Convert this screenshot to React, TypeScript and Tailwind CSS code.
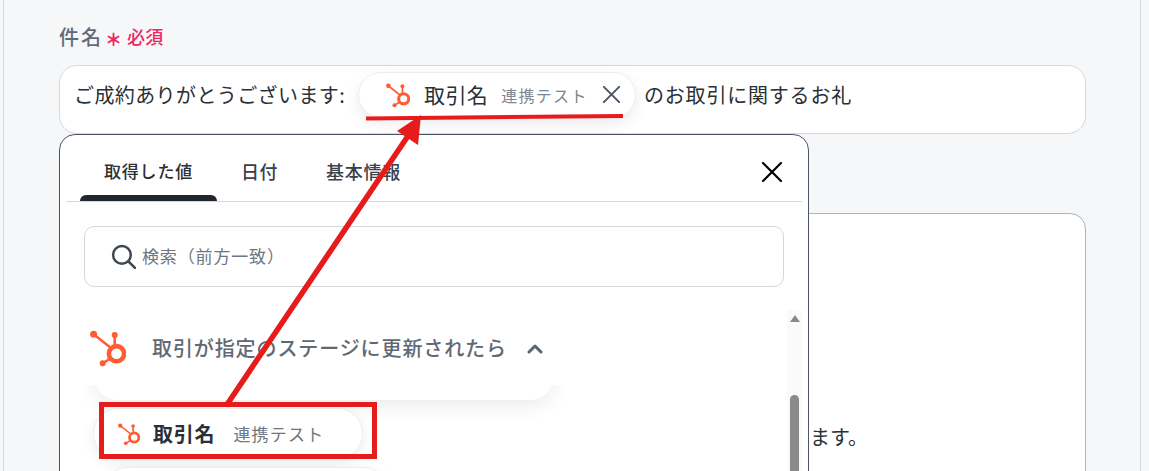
const FONT = "font-['Noto_Sans_CJK_JP','Noto_Sans',sans-serif]";

function Hub({ className }: { className: string }) {
  return (
    <svg viewBox="0 0 36 38" className={className} fill="none">
      <circle cx="26.5" cy="24.7" r="7.6" stroke="#ff5c35" strokeWidth="4.6" />
      <circle cx="3.6" cy="5.3" r="3.5" fill="#ff5c35" />
      <circle cx="24.7" cy="6" r="3" fill="#ff5c35" />
      <circle cx="12.7" cy="34.3" r="3" fill="#ff5c35" />
      <path d="M3.6 5.3 L21 19 M24.7 6 V17 M12.7 34.3 L21 29" stroke="#ff5c35" strokeWidth="2.6" />
    </svg>
  );
}

function X({ className, color, width }: { className: string; color: string; width: number }) {
  return (
    <svg viewBox="0 0 20 20" className={className} fill="none">
      <path d="M1 1 L19 19 M19 1 L1 19" stroke={color} strokeWidth={width} strokeLinecap="round" />
    </svg>
  );
}

export default function App() {
  return (
    <div className={`relative h-[471px] w-[1149px] overflow-hidden bg-[#f6f7f9] ${FONT}`}>
      <div className="ml-[3px] h-[471px] w-[1138px] border-x border-[#d3d8e0] pl-[55px] pr-[54px] pt-[23px]">
        <div className="-mt-[1px] flex h-[29px] items-center">
          <span className="text-[20px] font-medium tracking-[0.1em] text-[#5f6b7a]">件名</span>
          <span className="ml-[2px] mt-[3px] text-[17px] font-black leading-none text-[#f0265f]">＊</span>
          <span className="ml-[5px] text-[18px] font-medium tracking-[0.02em] text-[#f0265f]">必須</span>
        </div>
        <div className="mt-[14px] flex h-[69px] items-center rounded-[18px] border border-[#d3d8e0] bg-white pb-[10px] pl-[14px]">
          <span className="w-[284px] shrink-0 whitespace-nowrap text-[20px] tracking-[0.02em] text-[#2b2f36]">ご成約ありがとうございます:</span>
          <div className="flex h-[46px] w-[278px] shrink-0 items-center rounded-full border border-[#eceef1] bg-white pl-[27px] shadow-[0_6px_16px_rgba(0,0,0,0.08)]">
            <Hub className="h-[26px] w-[24px]" />
            <span className="ml-[14px] whitespace-nowrap text-[21px] tracking-[0.02em] text-[#2b2f36]">取引名</span>
            <span className="ml-[13px] whitespace-nowrap text-[16px] tracking-[0.08em] text-[#7c8591]">連携テスト</span>
            <X className="ml-[15px] h-[17px] w-[17px]" color="#4e5866" width={2.4} />
          </div>
          <span className="ml-[8px] whitespace-nowrap text-[20px] tracking-[0.04em] text-[#2b2f36]">のお取引に関するお礼</span>
        </div>
        <div className="mt-[79px] flex h-[300px] items-start justify-end rounded-[16px] border border-[#aab2bd] bg-white pr-[217px] pt-[208px]">
          <span className="text-[20px] text-[#2b2f36]">ます。</span>
        </div>
      </div>

      <div className="absolute left-[59px] top-[134px] h-[360px] w-[750px] rounded-[16px] border border-[#4b5563] bg-white px-[6px]">
        <div className="relative flex h-[67px] items-end border-b border-[#d3d8e0] pl-[14px]">
          <div className="relative flex h-[66px] w-[137px] items-center justify-center pt-[6px] text-[17px] font-medium tracking-[0.05em] text-[#2b2f36]">
            取得した値
            <div className="absolute bottom-0 left-0 h-[6px] w-[137px] rounded-t-[6px] bg-[#22272e]" />
          </div>
          <div className="flex h-[66px] w-[85px] items-center justify-center pt-[6px] text-[18px] font-medium tracking-[0.03em] text-[#3a414b]">日付</div>
          <div className="ml-[5px] flex h-[66px] w-[113px] items-center justify-center pt-[6px] text-[18px] font-medium tracking-[0.04em] text-[#3a414b]">基本情報</div>
          <X className="absolute right-[20px] top-[27px] h-[20px] w-[20px]" color="#000" width={2.2} />
        </div>
        <div className="ml-[18px] mt-[24px] flex h-[61px] w-[700px] items-center rounded-[10px] border border-[#d3d8e0] pb-[2px] pl-[26px]">
          <svg viewBox="0 0 24 24" className="mt-[2px] h-[25px] w-[25px]" fill="none" stroke="#3f4752" strokeWidth="2.4" strokeLinecap="round">
            <circle cx="10.5" cy="10.5" r="8.5" />
            <path d="M16.8 16.8 L23 23" />
          </svg>
          <span className="ml-[6px] text-[17px] tracking-[0.05em] text-[#6d7682]">検索（前方一致）</span>
        </div>
        <div className="relative mt-[23px] h-[170px] w-[736px] overflow-hidden">
          <div className="relative z-10 flex h-[75px] w-[721px] items-center bg-white pl-[24px]">
            <Hub className="h-[38px] w-[36px]" />
            <span className="ml-[26px] whitespace-nowrap text-[20px] font-medium tracking-[0.045em] text-[#5f6873]">取引が指定のステージに更新されたら</span>
            <svg viewBox="0 0 16 10" className="ml-[20px] mt-[2px] h-[10px] w-[16px]" fill="none" stroke="#5b6470" strokeWidth="3" strokeLinecap="round" strokeLinejoin="round">
              <path d="M2 8 L8 2 L14 8" />
            </svg>
          </div>
          <div className="ml-[29px] -mt-[30px] h-[45px] w-[458px] rounded-[22px] bg-white shadow-[0_6px_20px_rgba(0,0,0,0.08)]" />
          <div className="ml-[27px] mt-[8px] flex h-[51px] w-[270px] items-center rounded-full border border-[#eceef1] bg-white pl-[24px] shadow-[0_4px_14px_rgba(0,0,0,0.08)]">
            <Hub className="h-[24px] w-[22px]" />
            <span className="ml-[13px] whitespace-nowrap text-[20px] font-bold tracking-[0.04em] text-[#2b2f36]">取引名</span>
            <span className="ml-[18px] whitespace-nowrap text-[17px] tracking-[0.07em] text-[#6d7682]">連携テスト</span>
          </div>
          <div className="ml-[37px] mt-[8px] h-[50px] w-[285px] rounded-full border border-[#eceef1] bg-white shadow-[0_4px_14px_rgba(0,0,0,0.08)]" />
          <div className="absolute right-0 top-0 z-20 h-full w-[15px] bg-[#fafafa]">
            <div className="ml-[3px] mt-[5px] h-0 w-0 border-x-[5px] border-b-[7px] border-x-transparent border-b-[#8a8a8a]" />
            <div className="absolute left-[3px] top-[85px] h-[90px] w-[9px] rounded-t-full bg-[#8a8a8a]" />
          </div>
        </div>
      </div>

      <svg className="pointer-events-none absolute left-0 top-0 z-30 h-[471px] w-[1149px]" viewBox="0 0 1149 471" fill="none">
        <path d="M366 118.5 L623 116" stroke="#e61c1c" strokeWidth="4" />
        <path d="M226 406 L412 130" stroke="#e61c1c" strokeWidth="5.5" />
        <path d="M421 115 L397 131 L418 145 Z" fill="#e61c1c" />
        <rect x="101.5" y="404.5" width="273" height="52" stroke="#e61c1c" strokeWidth="5" />
      </svg>
    </div>
  );
}
